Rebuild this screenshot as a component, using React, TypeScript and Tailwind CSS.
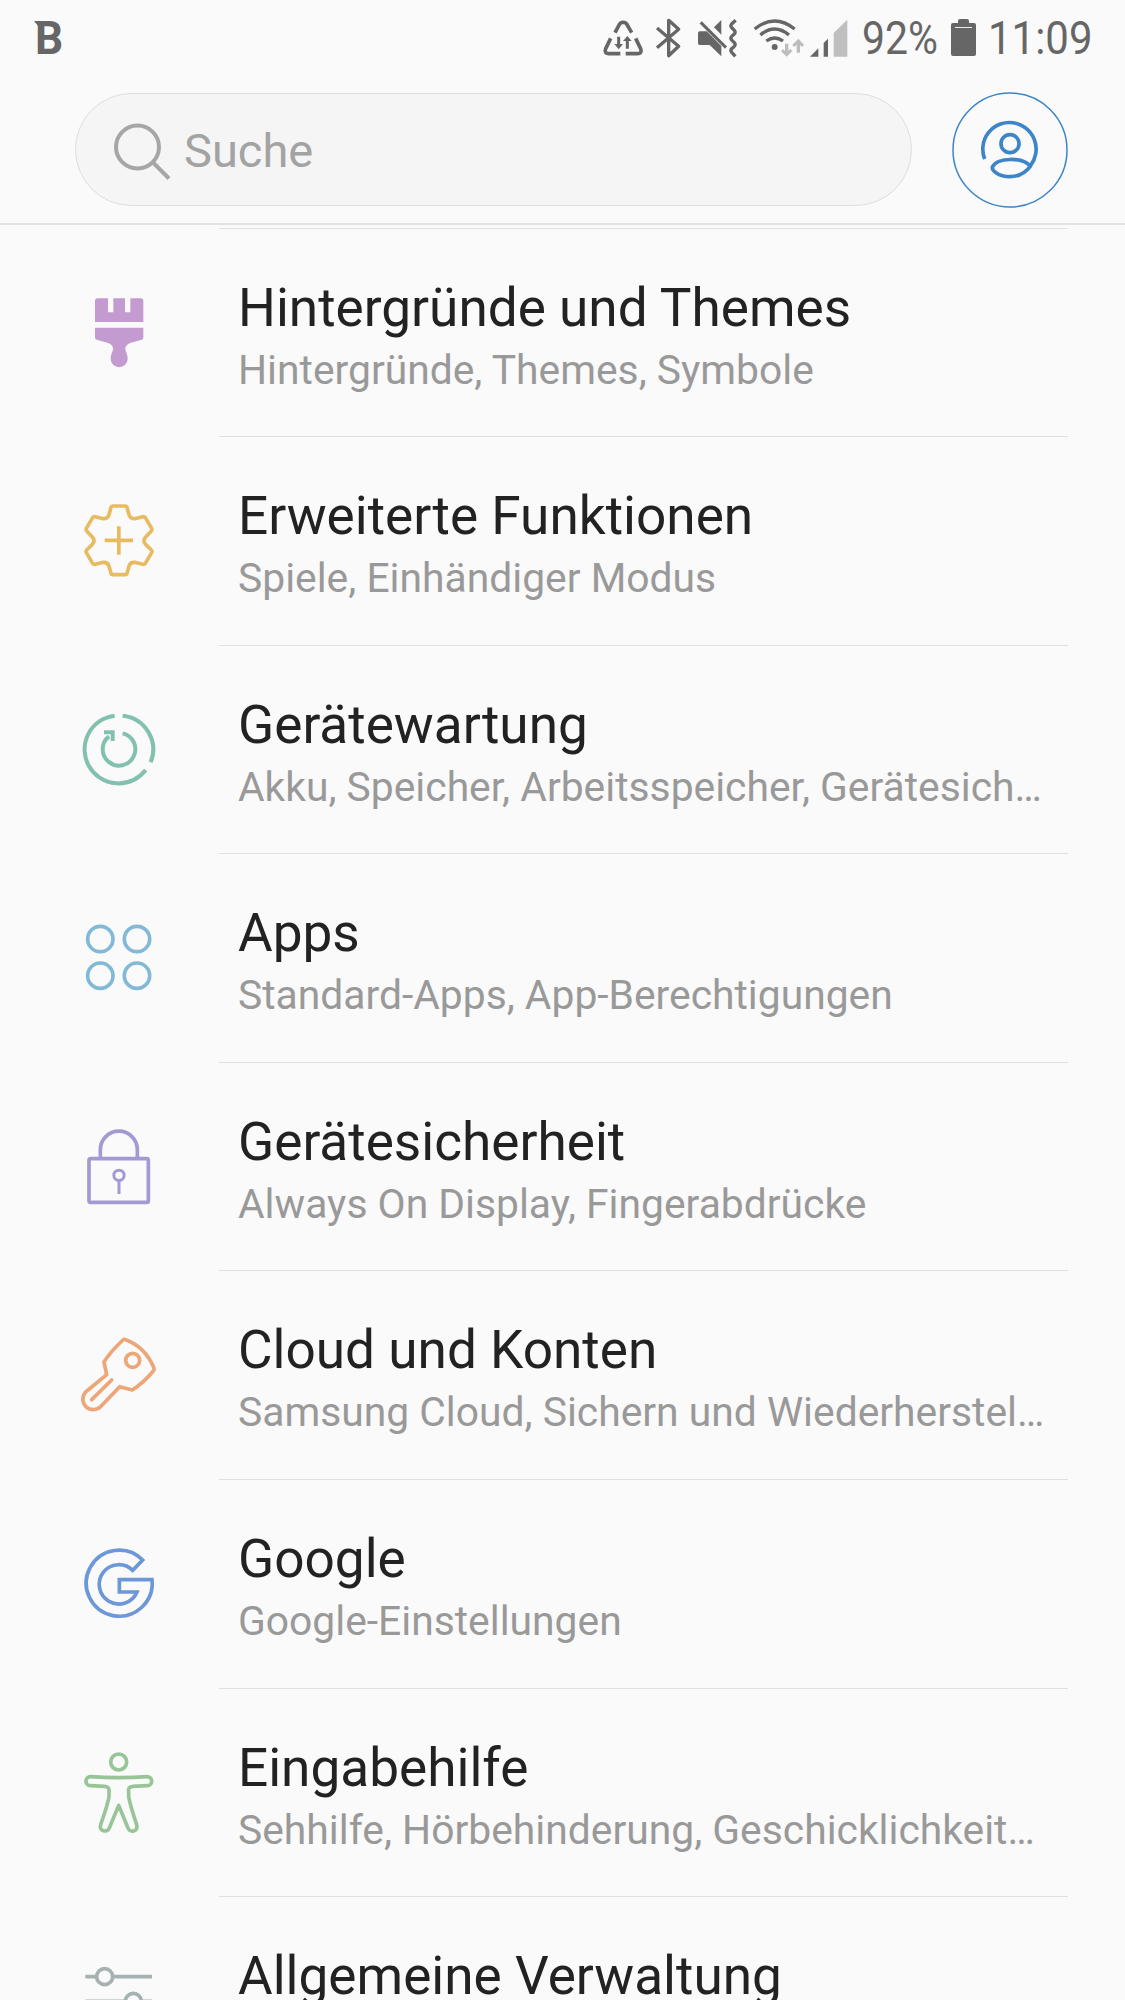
import React from "react";

interface SettingsItem {
  id: string;
  title: string;
  subtitle?: string;
  icon: React.ReactNode;
}

interface IconProps {
  viewBox: string;
  color: string;
  children: React.ReactNode;
}

function RowIcon({ viewBox, color, children }: IconProps) {
  return (
    <svg
      className={`w-[120px] h-[120px] shrink-0 ${color}`}
      viewBox={viewBox}
      fill="none"
      stroke="currentColor"
      strokeWidth={11}
      strokeLinejoin="round"
    >
      {children}
    </svg>
  );
}

const items: SettingsItem[] = [
  {
    id: "themes",
    title: "Hintergründe und Themes",
    subtitle: "Hintergründe, Themes, Symbole",
    icon: (
      <RowIcon viewBox="0 8 360 360" color="text-[#c39bd0]">
        <g fill="currentColor" stroke="none">
          <path d="M105 155V92q0-8 8-8h31v42h16V84h35v42h16V84h31q8 0 8 8v63z" />
          <path d="M105 172h145v30q0 5-5 6l-32 9q-17 6-17 17c0 12 7 16 7 31a25 25 0 0 1-51 0c0-15 7-19 7-31q0-11-17-17l-32-9q-5-1-5-6z" />
        </g>
      </RowIcon>
    ),
  },
  {
    id: "advanced",
    title: "Erweiterte Funktionen",
    subtitle: "Spiele, Einhändiger Modus",
    icon: (
      <RowIcon viewBox="0 3 360 360" color="text-[#e8bb62]">
        <path d="M158 78H196Q200 78 201 82L207 104Q210 117 224 116L248 110Q253 109 256 113L275 145Q277 149 274 153L257 171Q247 182 257 193L274 210Q277 214 275 218L256 250Q253 254 248 253L224 247Q210 246 207 259L201 280Q200 284 196 284H158Q154 284 153 280L147 259Q144 246 130 247L106 253Q101 254 98 250L79 218Q77 214 80 210L97 193Q107 182 97 171L80 153Q77 149 79 145L98 113Q101 109 106 110L130 116Q144 117 147 104L153 82Q154 78 158 78Z" />
        <path d="M134 181H219M176.500 139V224" />
      </RowIcon>
    ),
  },
  {
    id: "maintenance",
    title: "Gerätewartung",
    subtitle: "Akku, Speicher, Arbeitsspeicher, Gerätesich…",
    icon: (
      <RowIcon viewBox="1 -1 360 360" color="text-[#82c0af]">
        <path d="M165 76A102 102 0 1 0 258 239" strokeWidth={12} />
        <path d="M189 76A102 102 0 0 1 273 216" strokeWidth={12} />
        <path d="M189 129A49 49 0 1 1 148 138" strokeWidth={12} />
        <path d="M133 126H159V152" strokeLinejoin="miter" strokeWidth={12} />
      </RowIcon>
    ),
  },
  {
    id: "apps",
    title: "Apps",
    subtitle: "Standard-Apps, App-Berechtigungen",
    icon: (
      <RowIcon viewBox="0 -5 360 360" color="text-[#81b9d6]">
        <circle cx="121" cy="118" r="38" />
        <circle cx="231" cy="118" r="38" />
        <circle cx="121" cy="228" r="38" />
        <circle cx="231" cy="228" r="38" />
      </RowIcon>
    ),
  },
  {
    id: "security",
    title: "Gerätesicherheit",
    subtitle: "Always On Display, Fingerabdrücke",
    icon: (
      <RowIcon viewBox="0 -10 360 360" color="text-[#a399d3]">
        <rect x="87" y="145" width="178" height="131" rx="5" />
        <path d="M121 145V118a55 55 0 0 1 111 0V145" />
        <circle cx="177" cy="195" r="15.500" strokeWidth={9} />
        <path d="M177 211V251" strokeWidth={9} />
      </RowIcon>
    ),
  },
  {
    id: "cloud",
    title: "Cloud und Konten",
    subtitle: "Samsung Cloud, Sichern und Wiederherstel…",
    icon: (
      <RowIcon viewBox="-1 0 360 360" color="text-[#eca678]">
        <path d="M188 75Q191 72 196 74Q255 96 281 159Q283 164 279 168Q250 203 216 225L178 215L122 274A31 31 0 0 1 76 231L139 179L131 141Q151 109 188 75Z" />
        <circle cx="217" cy="136" r="21" />
        <path d="M94 254L154 195" strokeLinecap="round" />
      </RowIcon>
    ),
  },
  {
    id: "google",
    title: "Google",
    subtitle: "Google-Einstellungen",
    icon: (
      <RowIcon viewBox="-3 -6 360 360" color="text-[#6c97d8]">
        <path
          d="M245 102A99 99 0 1 0 273 161H175V198H228A59 59 0 1 1 215 133Z"
          strokeLinejoin="miter"
        />
      </RowIcon>
    ),
  },
  {
    id: "accessibility",
    title: "Eingabehilfe",
    subtitle: "Sehhilfe, Hörbehinderung, Geschicklichkeit…",
    icon: (
      <RowIcon viewBox="0 -8 360 360" color="text-[#98c598]">
        <circle cx="176" cy="79" r="24" />
        <path d="M92 123Q134 126 177 126T261 123A13.500 13.500 0 0 1 262 150L219 152Q203 153 206 169V184Q211 210 230 267C236 289 209 292 204 277L176 209L148 277C142 292 116 288 122 267Q142 210 147 184V169Q149 153 134 152L91 150A13.500 13.500 0 0 1 92 123Z" />
      </RowIcon>
    ),
  },
  {
    id: "general",
    title: "Allgemeine Verwaltung",
    icon: (
      <RowIcon viewBox="0 0 360 360" color="text-[#a5b2b1]">
        <path d="M76 107H108M160 107H276M76 181H194M246 181H276" />
        <circle cx="134" cy="107" r="24" />
        <circle cx="220" cy="181" r="24" />
      </RowIcon>
    ),
  },
];

function StatusBar() {
  return (
    <div className="flex items-center h-[76px] pl-[34px] text-[#666666]">
      {/* Bitdefender notification */}
      <div className="relative w-[30px] pl-px text-[46px] leading-[76px] font-bold">
        <span className="block origin-left scale-x-[0.96]">B</span>
        <svg className="absolute left-0 top-[21px] w-[8px] h-[6px]" viewBox="0 0 8 6" fill="currentColor">
          <path d="M0 0h8v6H5z" />
        </svg>
      </div>

      <div className="flex items-center ml-[538px]">
        {/* data saver */}
        <svg className="w-[42px] h-[44px]" viewBox="66 46 126 132" fill="none" stroke="currentColor" strokeWidth={11}>
          <path d="M105 96L119 70Q122 65 127 65H132Q137 65 140 70L155 96" />
          <path d="M92 113L77 144Q72 159 87 159H121" />
          <path d="M167 113L182 144Q187 159 172 159H137" />
          <path d="M116 108V132M142 144V118" strokeWidth={9} />
          <path d="M103 130H129L116 146ZM129 121H155L142 106Z" fill="currentColor" stroke="none" />
        </svg>
        {/* bluetooth */}
        <svg className="w-[28px] h-[44px] ml-[10px]" viewBox="222 46 84 132" fill="none" stroke="currentColor" strokeWidth={10}>
          <path d="M231 82L296 137L266 165V59L296 86L231 141" strokeLinejoin="round" />
        </svg>
        {/* mute and vibrate */}
        <svg className="w-[42px] h-[44px] ml-[14px]" viewBox="348 46 126 132" fill="currentColor">
          <path d="M354 97Q354 92 359 92H380L424 136V167L389 133H359Q354 133 354 128Z" />
          <path d="M402 80L424 58V102Z" />
          <path d="M362 65L438 141" stroke="currentColor" strokeWidth={9} />
          <path
            d="M467 59L455 70Q450 76 456 82L463 89Q468 95 462 101L455 107Q450 113 456 119L463 126Q468 132 462 138L455 144Q450 150 456 156L466 167"
            fill="none"
            stroke="currentColor"
            strokeWidth={10}
          />
        </svg>
        {/* wifi */}
        <svg className="w-[53px] h-[44px] ml-[14px]" viewBox="516 46 159 132" fill="none" stroke="currentColor" strokeWidth={10}>
          <path d="M524 85Q584 37 644 85M541 103Q584 67 627 103M559 121Q584 103 609 121" />
          <circle cx="584" cy="139" r="9" fill="currentColor" stroke="none" />
          <g className="text-[#bdbdbd]">
            <path d="M620 129V160M655 156V124" />
            <path d="M606 148L620 162L634 148M640 136L655 121L669 136" strokeWidth={9} />
          </g>
        </svg>
        {/* mobile signal */}
        <svg className="w-[40px] h-[44px] ml-[4px]" viewBox="687 46 120 132" fill="currentColor">
          <path d="M690 168L715 143V168ZM731 127L744 114V168H731Z" />
          <path d="M761 97L802 57V168H761Z" fill="#bfbfbf" />
        </svg>
      </div>

      <div className="w-[74px] ml-[13px] text-[47px] leading-[76px]">
        <span className="inline-block origin-left scale-x-[0.87]">92%</span>
      </div>
      <svg className="w-[25px] h-[38px] ml-[15px]" viewBox="0 0 25 38" fill="currentColor">
        <path d="M7 4V2q0-2 2-2h7q2 0 2 2v2h5q2 0 2 2v29q0 2-2 2H2q-2 0-2-2V6q0-2 2-2z" />
        <path d="M4 8.500H21" stroke="#eeeeee" />
      </svg>
      <div className="w-[104px] ml-[12px] text-[47px] leading-[76px]">
        <span className="inline-block origin-left scale-x-[0.893]">11:09</span>
      </div>
    </div>
  );
}

function SearchHeader() {
  return (
    <div className="flex items-start h-[149px] pt-[16px] pl-[75px] border-b-2 border-[#e3e3e3]">
      <div className="flex items-center w-[837px] h-[113px] mt-[1px] pl-[37px] rounded-full bg-[#f5f5f5] border border-[#dedede]">
        <svg className="w-[60px] h-[60px] mt-px" viewBox="0 0 60 60" fill="none" stroke="#a6a6a6" strokeWidth={4}>
          <circle cx="24.500" cy="27" r="21.500" />
          <path d="M39.500 42L56 58.500" />
        </svg>
        <span className="ml-[11px] pt-[4px] text-[47px] text-[#a3a3a3]">Suche</span>
      </div>
      <svg
        className="w-[116px] h-[116px] ml-[39.500px]"
        viewBox="0 0 348 348"
        fill="none"
        stroke="#3d85c8"
        strokeWidth={11}
      >
        <circle cx="174" cy="174" r="171" strokeWidth={4.5} />
        <path d="M98 201A80 80 0 1 1 236 220" />
        <circle cx="174" cy="155" r="27" />
        <path d="M235 223C214 195 134 195 121 226C120 234 136 254 174 254Q211 254 235 223Z" strokeLinejoin="round" />
      </svg>
    </div>
  );
}

export default function App() {
  return (
    <div className="w-[1125px] h-[2000px] overflow-hidden bg-[#fafafa] font-['Roboto','Noto_Sans',sans-serif]">
      <StatusBar />
      <SearchHeader />

      {/* settings list */}
      <div className="pt-[2.500px]">
        <div className="ml-[219px] w-[849px] h-px bg-[#e2e2e2]" />
        {items.map((item) => (
          <div key={item.id} className="flex h-[208.580px] pl-[60px]">
            <div className="w-[159px] pt-[44px]">{item.icon}</div>
            <div className="w-[849px] pl-[19px] pt-[47px] border-b border-[#e0e0e0] whitespace-nowrap">
              <h2 className="text-[53.150px] leading-[64px] text-[#222222]">{item.title}</h2>
              {item.subtitle && (
                <p className="mt-[6px] text-[40.800px] leading-[48px] text-[#999999]">{item.subtitle}</p>
              )}
            </div>
          </div>
        ))}
      </div>
    </div>
  );
}
